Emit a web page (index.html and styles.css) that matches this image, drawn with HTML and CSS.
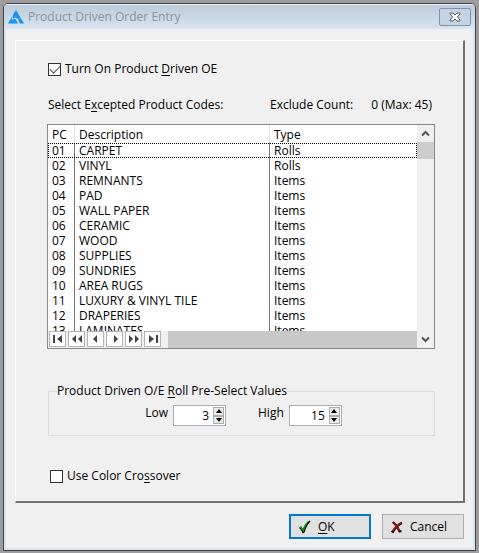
FILE: index.html
```html
<!DOCTYPE html>
<html lang="en">
<head>
<meta charset="utf-8">
<title>Product Driven Order Entry</title>
<link rel="stylesheet" href="styles.css">
</head>
<body>
<form class="window">
  <header class="titlebar">
    <svg class="logo" width="16" height="14" viewBox="0 0 16 14" fill="#1594f2"><path d="M8 0 13 8.500 10 9 8 7.500 4.500 8.500 5 4.500Z"/><path d="M4 6.500 3.500 9.500 7.500 9 10 13.500H0Z"/><path d="M13 8.500 16 13.500H12L10 9.500Z"/></svg>
    <h1 class="title">Product Driven Order Entry</h1>
    <button class="close" type="button" aria-label="Close"><svg width="12" height="10" viewBox="0 0 12 10"><path d="M1 1H4L6 3 8 1H11V2L8.500 5 11 8V9H8L6 7 4 9H1V8L3.500 5 1 2Z" fill="#fff" stroke="#565c68"/></svg></button>
  </header>
  <div class="client">
    <main class="panel">
      <label class="check"><input type="checkbox" checked><span>Turn On Product <u>D</u>riven OE</span></label>
      <div class="caption">
        <span id="codes">Select E<u>x</u>cepted Product Codes:</span>
        <span class="count">Exclude Count:</span>
        <span>0 (Max: 45)</span>
      </div>
      <div class="list">
        <div class="view">
          <table class="codes" aria-labelledby="codes">
            <thead><tr><th class="pc">PC</th><th class="desc">Description</th><th>Type</th></tr></thead>
            <tbody>
              <tr class="focused"><td>01</td><td>CARPET</td><td>Rolls</td></tr>
              <tr><td>02</td><td>VINYL</td><td>Rolls</td></tr>
              <tr><td>03</td><td>REMNANTS</td><td>Items</td></tr>
              <tr><td>04</td><td>PAD</td><td>Items</td></tr>
              <tr><td>05</td><td>WALL PAPER</td><td>Items</td></tr>
              <tr><td>06</td><td>CERAMIC</td><td>Items</td></tr>
              <tr><td>07</td><td>WOOD</td><td>Items</td></tr>
              <tr><td>08</td><td>SUPPLIES</td><td>Items</td></tr>
              <tr><td>09</td><td>SUNDRIES</td><td>Items</td></tr>
              <tr><td>10</td><td>AREA RUGS</td><td>Items</td></tr>
              <tr><td>11</td><td>LUXURY &amp; VINYL TILE</td><td>Items</td></tr>
              <tr><td>12</td><td>DRAPERIES</td><td>Items</td></tr>
              <tr><td>13</td><td>LAMINATES</td><td>Items</td></tr>
            </tbody>
          </table>
        </div>
        <div class="vscroll">
          <button type="button" aria-label="Scroll up"><svg width="9" height="7" viewBox="0 0 9 7"><path d="M1 5.500 4.500 2 8 5.500" fill="none" stroke="#555" stroke-width="2"/></svg></button>
          <div class="vthumb"></div>
          <button class="down" type="button" aria-label="Scroll down"><svg width="9" height="7" viewBox="0 0 9 7"><path d="M1 1.500 4.500 5 8 1.500" fill="none" stroke="#555" stroke-width="2"/></svg></button>
        </div>
        <div class="nav">
          <button type="button" aria-label="First"><svg width="10" height="8" viewBox="0 0 10 8"><path d="M0 0H2V8H0ZM9 0V8L4 4Z"/></svg></button>
          <button type="button" aria-label="Previous page"><svg width="10" height="8" viewBox="0 0 10 8"><path d="M4 0V8L0 4ZM10 0V8L6 4Z"/></svg></button>
          <button type="button" aria-label="Previous"><svg width="10" height="8" viewBox="0 0 10 8"><path d="M6 0V8L2 4Z"/></svg></button>
          <button type="button" aria-label="Next"><svg width="10" height="8" viewBox="0 0 10 8"><path d="M4 0V8L8 4Z"/></svg></button>
          <button type="button" aria-label="Next page"><svg width="10" height="8" viewBox="0 0 10 8"><path d="M0 0V8L4 4ZM6 0V8L10 4Z"/></svg></button>
          <button type="button" aria-label="Last"><svg width="10" height="8" viewBox="0 0 10 8"><path d="M1 0V8L6 4ZM8 0H10V8H8Z"/></svg></button>
          <div class="hthumb"></div>
        </div>
      </div>
      <fieldset class="group">
        <legend>Product Driven O/E <u>R</u>oll Pre-Select Values</legend>
        <div class="fields">
          <div class="field">
            <label for="low">Low</label>
            <div class="spin"><input id="low" type="text" value="3">
              <div class="arrows"><button type="button" aria-label="Increase low"><svg width="6" height="4" viewBox="0 0 6 4"><path d="M3 0 6 4H0Z"/></svg></button><button type="button" aria-label="Decrease low"><svg width="6" height="4" viewBox="0 0 6 4"><path d="M0 0H6L3 4Z"/></svg></button></div>
            </div>
          </div>
          <div class="field">
            <label for="high">High</label>
            <div class="spin"><input id="high" type="text" value="15">
              <div class="arrows"><button type="button" aria-label="Increase high"><svg width="6" height="4" viewBox="0 0 6 4"><path d="M3 0 6 4H0Z"/></svg></button><button type="button" aria-label="Decrease high"><svg width="6" height="4" viewBox="0 0 6 4"><path d="M0 0H6L3 4Z"/></svg></button></div>
            </div>
          </div>
        </div>
      </fieldset>
      <label class="check crossover"><input type="checkbox"><span>Use Color Cro<u>s</u>sover</span></label>
    </main>
    <footer class="actions">
      <button class="action primary" type="submit"><svg width="14" height="14" viewBox="0 0 14 14"><path d="M1 8 3 6.500 5 9C6.500 5 8.500 2 11.500 .5L12.500 1.500C9.500 4 8 8 6.500 12.500L4.500 13.500C4 11 3 9.500 1 8Z" fill="#000"/><path d="M1 7.500 3 6 5 9C6.500 5 8.500 2 11.500 .5 8.500 4 7 7.500 5.500 12 4.500 10 3 8.500 1 7.500Z" fill="#119c1b"/></svg><span><u>O</u>K</span></button>
      <button class="action" type="button"><svg width="14" height="14" viewBox="0 0 14 14"><path d="M3 2.500C6 4 8 8 9.500 11.500L11.500 11M12 3C8 5 5 8 3 12L1.500 11" fill="none" stroke="#2b0000" stroke-width="2"/><path d="M2.500 2C5.500 4 7.500 7 9 11M11.500 2.500C7.500 5 4.500 7.500 2.500 11.500" fill="none" stroke="#8e1010" stroke-width="1.600"/></svg><span>Cancel</span></button>
    </footer>
  </div>
</form>
</body>
</html>
```
FILE: styles.css
```css
* { box-sizing: border-box; }

body {
  margin: 0;
  min-height: 100vh;
  padding: 3px;
  background: #9c9c9c;
  color: #000;
  font: 12px/16px "Open Sans", "Noto Sans", sans-serif;
}

button, input { margin: 0; padding: 0; font: inherit; color: inherit; }
svg { display: block; flex: none; }
u { text-underline-offset: 2px; }

.window {
  border: 1px solid #444;
  border-radius: 5px 5px 0 0;
  overflow: hidden;
  background: #d9e4f1;
}

.titlebar {
  display: flex;
  align-items: center;
  gap: 4px;
  height: 25px;
  padding: 0 4px;
  border-top: 1px solid #e8f1f9;
  background: linear-gradient(#bccbda, #d7e4f2);
}

.title {
  flex: 1;
  margin: 0;
  color: #8d9297;
  font-size: 12px;
  font-weight: 400;
}

.close {
  display: flex;
  align-items: center;
  justify-content: center;
  width: 32px;
  height: 18px;
  border: 1px solid #8291ae;
  border-radius: 2px;
  background: #c6d3e2;
}

.client {
  margin: 0 2px 2px;
  padding: 11px 8px 9px 9px;
  background: #f0f0f0;
}

.panel {
  padding: 20px 28px 17px 31px;
  border: solid;
  border-width: 1px 2px 2px 1px;
  border-color: #fff #727272 #727272 #fff;
}

.check { display: flex; align-items: center; gap: 4px; margin-left: 1px; }
.crossover { margin-left: 3px; }

.check input {
  appearance: none;
  width: 13px;
  height: 13px;
  border: 1px solid #333;
  background: #fff;
}

.check input:checked::before {
  content: "";
  display: block;
  width: 9px;
  height: 5px;
  margin: 1px;
  border: solid #444;
  border-width: 0 0 1px 1px;
  transform: rotate(-45deg);
}

.caption { display: flex; gap: 18px; margin: 20px 3px 11px 1px; }
.count { margin-left: auto; }

.list {
  display: grid;
  grid-template-columns: 1fr 17px;
  grid-template-rows: 206px 17px;
  border: 1px solid #828790;
  background: #fff;
}

.view { overflow: hidden; }

.codes {
  width: 100%;
  table-layout: fixed;
  border-spacing: 0;
}

.codes th, .codes td {
  height: 15px;
  padding: 0 0 0 4px;
  border-right: 1px solid #707780;
  line-height: 15px;
  font-weight: 400;
  text-align: left;
  white-space: nowrap;
}

.codes th { height: 18px; border-color: #e2e6ec; }
.codes th:last-child, .codes td:last-child { border-right: 0; }
.pc { width: 27px; }
.desc { width: 195px; }
.focused { outline: 1px dotted #000; outline-offset: -1px; }

.vscroll {
  grid-row: 1 / 3;
  grid-column: 2;
  display: flex;
  flex-direction: column;
  background: #f0f0f0;
}

.vscroll button {
  display: flex;
  align-items: center;
  justify-content: center;
  height: 17px;
  border: 0;
  background: none;
}

.vthumb { height: 17px; background: #cdcdcd; }
.vscroll .down { margin-top: auto; }

.nav { display: flex; gap: 2px; padding-left: 1px; background: #f0f0f0; }

.nav button {
  display: flex;
  align-items: center;
  justify-content: center;
  width: 17px;
  height: 16px;
  border: 1px solid #b4b4b4;
  background: #fdfdfd;
  fill: #444;
}

.hthumb { flex: 1; margin-left: 5px; background: #c8c8c8; }

.group {
  margin: 34px 0 32px 1px;
  padding: 0 8px 9px;
  border: 1px solid #dcdcdc;
}

.group legend { padding: 0; }
.fields { display: flex; justify-content: center; gap: 32px; margin-left: 4px; }
.field { display: flex; gap: 5px; }

.spin {
  display: flex;
  width: 53px;
  height: 21px;
  margin-top: 6px;
  padding: 1px;
  border: 1px solid #abadb3;
  background: #fff;
}

.field label { margin-top: 6px; }
.spin input { flex: 1; min-width: 0; padding-right: 4px; border: 0; background: none; text-align: right; }
.arrows { display: flex; flex-direction: column; width: 11px; }

.arrows button {
  display: flex;
  flex: 1;
  align-items: center;
  justify-content: center;
  border: 1px solid #acacac;
  background: #ececec;
}

.actions { display: flex; justify-content: flex-end; gap: 11px; margin: 11px 1px 0 0; }

.action {
  display: flex;
  align-items: center;
  gap: 6px;
  width: 82px;
  height: 25px;
  padding-left: 7px;
  border: 1px solid #adadad;
  background: #e1e1e1;
}

.primary { border: 2px solid #0078d7; }
```
